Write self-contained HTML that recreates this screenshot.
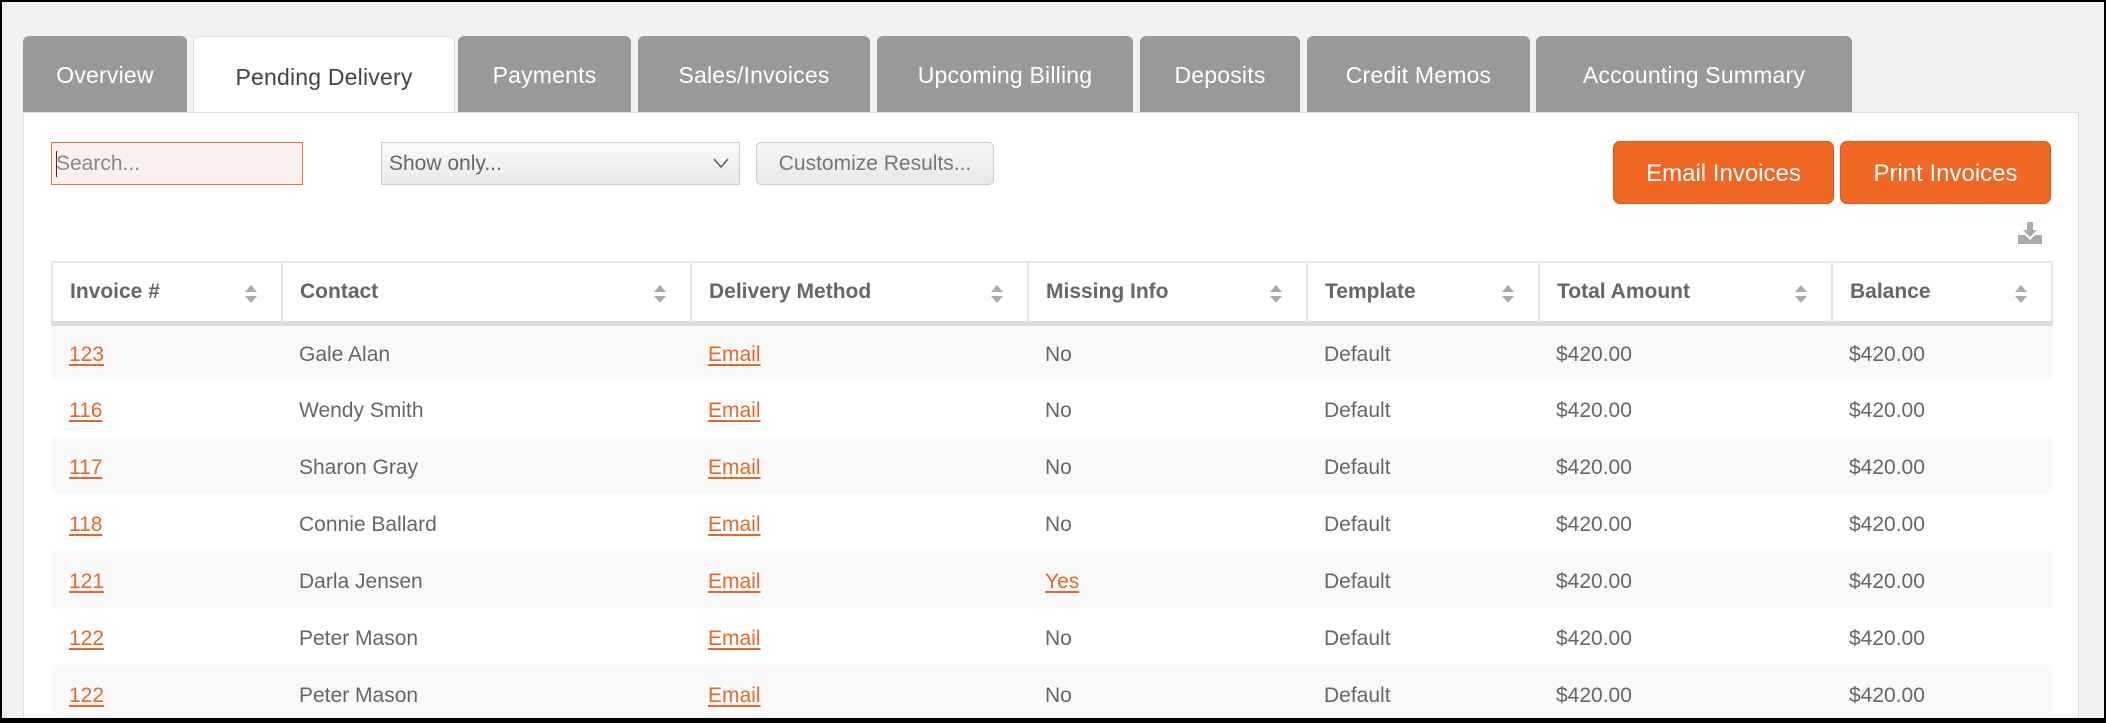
<!DOCTYPE html>
<html><head><meta charset="utf-8"><style>
*{box-sizing:border-box;margin:0;padding:0}
html,body{width:2106px;height:723px;overflow:hidden}
body{background:#000;font-family:"Liberation Sans",sans-serif;position:relative}
#bg{position:absolute;left:2px;top:2px;right:2px;bottom:5px;background:#f2f2f2;overflow:hidden}
.tab{position:absolute;top:34px;height:78px;background:#999;color:#fff;font-size:23px;border-radius:6px 6px 0 0;text-align:center;line-height:78px;letter-spacing:0.2px}
.tab.act{background:#fff;color:#444;border:1px solid #ddd;border-bottom:none;height:80px;line-height:80px}
#panel{position:absolute;left:21px;top:110px;width:2056px;height:620px;background:#fff;border:1px solid #ddd}
.abs{position:absolute}
#search{left:49px;top:140px;width:252px;height:43px;border:1px solid #e0733f;background:#fcf0ee;color:#888;font-size:21px;line-height:41px;padding-left:4px}
#search:before{content:"";position:absolute;left:4px;top:8px;width:1px;height:26px;background:#333}
#sel{left:379px;top:140px;width:359px;height:43px;border:1px solid #ccc;background:linear-gradient(#fafafa,#e9e9e9);color:#666;font-size:21px;line-height:41px;padding-left:7px}
#cust{left:754px;top:140px;width:238px;height:43px;border:1px solid #ccc;border-radius:5px;background:linear-gradient(#f7f7f7,#e8e8e8);color:#777;font-size:21px;line-height:41px;text-align:center}
.btn{top:139px;height:63px;background:#f06623;border:1px solid #d9581b;border-radius:7px;color:#fff;font-size:24px;line-height:63px;text-align:center}
table{position:absolute;left:49px;top:259px;width:2002px;border-collapse:collapse;font-size:21px;color:#666}
th{height:61px;text-align:left;font-weight:bold;color:#666;border:2px solid #e6e6e6;border-bottom:5px solid #ddd;padding-left:17px;position:relative}
th span.s{position:absolute;right:24px;top:22px;width:12px;height:18px}
td{height:57px;padding-left:17px;padding-top:4px}
tr:nth-child(even) td{background:#f9f9f9}
a{color:#e06a2a;text-decoration:underline;text-underline-offset:3px}
</style></head><body><div id="bg">
<div class="tab" style="left:21px;width:164px">Overview</div>
<div class="tab act" style="left:191px;width:262px">Pending Delivery</div>
<div class="tab" style="left:456px;width:173px">Payments</div>
<div class="tab" style="left:636px;width:232px">Sales/Invoices</div>
<div class="tab" style="left:875px;width:256px">Upcoming Billing</div>
<div class="tab" style="left:1138px;width:160px">Deposits</div>
<div class="tab" style="left:1305px;width:223px">Credit Memos</div>
<div class="tab" style="left:1534px;width:316px">Accounting Summary</div>
<div id="panel"></div>
<div id="search" class="abs">Search...</div>
<div id="sel" class="abs">Show only...<svg style="position:absolute;right:10px;top:14px" width="16" height="12" viewBox="0 0 16 12"><path d="M1 2l7 8 7-8" fill="none" stroke="#666" stroke-width="1.6"/></svg></div>
<div id="cust" class="abs">Customize Results...</div>
<div class="abs btn" style="left:1611px;width:221px">Email Invoices</div>
<div class="abs btn" style="left:1838px;width:211px">Print Invoices</div>
<svg class="abs" style="left:2016px;top:220px" width="24" height="22" viewBox="0 0 24 22"><path d="M9 0h6v8h4l-7 7-7-7h4z" fill="#aaa"/><path d="M0 13h7l5 5 5-5h7v9H0z" fill="#aaa"/></svg>
<table>
<tr><th style="width:230px">Invoice #<span class="s"></span></th><th style="width:409px">Contact<span class="s"></span></th><th style="width:337px">Delivery Method<span class="s"></span></th><th style="width:279px">Missing Info<span class="s"></span></th><th style="width:232px">Template<span class="s"></span></th><th style="width:293px">Total Amount<span class="s"></span></th><th>Balance<span class="s"></span></th></tr>
<tr><td><a>123</a></td><td>Gale Alan</td><td><a>Email</a></td><td>No</td><td>Default</td><td>$420.00</td><td>$420.00</td></tr>
<tr><td><a>116</a></td><td>Wendy Smith</td><td><a>Email</a></td><td>No</td><td>Default</td><td>$420.00</td><td>$420.00</td></tr>
<tr><td><a>117</a></td><td>Sharon Gray</td><td><a>Email</a></td><td>No</td><td>Default</td><td>$420.00</td><td>$420.00</td></tr>
<tr><td><a>118</a></td><td>Connie Ballard</td><td><a>Email</a></td><td>No</td><td>Default</td><td>$420.00</td><td>$420.00</td></tr>
<tr><td><a>121</a></td><td>Darla Jensen</td><td><a>Email</a></td><td><a>Yes</a></td><td>Default</td><td>$420.00</td><td>$420.00</td></tr>
<tr><td><a>122</a></td><td>Peter Mason</td><td><a>Email</a></td><td>No</td><td>Default</td><td>$420.00</td><td>$420.00</td></tr>
<tr><td><a>122</a></td><td>Peter Mason</td><td><a>Email</a></td><td>No</td><td>Default</td><td>$420.00</td><td>$420.00</td></tr>
</table>
</div>
<style>th span.s:before,th span.s:after{content:"";position:absolute;left:0;border-left:6px solid transparent;border-right:6px solid transparent}th span.s:before{top:0;border-bottom:7px solid #aaa}th span.s:after{bottom:0;border-top:7px solid #aaa}</style>
</body></html>
